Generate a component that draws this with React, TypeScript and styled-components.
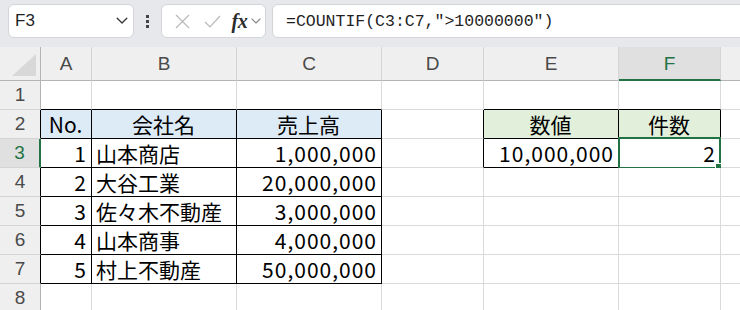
import React from 'react'
import styled, { createGlobalStyle } from 'styled-components'

const GREEN = '#217346'
const GRID = '#dadada'
const HEAD_LINE = '#b4b4b4'

type Align = 'left' | 'center' | 'right'
type Cell = { v: string; align?: Align; fill?: string }

// the last column is only partly in view, so its letter is left off
const columns = ['A', 'B', 'C', 'D', 'E', 'F', 'G']
const labelled = 6
const rows = [1, 2, 3, 4, 5, 6, 7, 8]
const selected = { col: 5, row: 3 }

const BLUE_HEAD = '#ddebf7'
const GREEN_HEAD = '#e2efda'

const companies: [string, string, string][] = [
  ['1', '山本商店', '1,000,000'],
  ['2', '大谷工業', '20,000,000'],
  ['3', '佐々木不動産', '3,000,000'],
  ['4', '山本商事', '4,000,000'],
  ['5', '村上不動産', '50,000,000'],
]

const cells: Record<string, Cell> = {
  A2: { v: 'No.', align: 'center', fill: BLUE_HEAD },
  B2: { v: '会社名', align: 'center', fill: BLUE_HEAD },
  C2: { v: '売上高', align: 'center', fill: BLUE_HEAD },
  E2: { v: '数値', align: 'center', fill: GREEN_HEAD },
  F2: { v: '件数', align: 'center', fill: GREEN_HEAD },
  E3: { v: '10,000,000', align: 'right' },
  F3: { v: '2', align: 'right' },
}
companies.forEach(([no, name, sales], i) => {
  const r = i + 3
  cells[`A${r}`] = { v: no, align: 'right' }
  cells[`B${r}`] = { v: name, align: 'left' }
  cells[`C${r}`] = { v: sales, align: 'right' }
})

// bordered ranges (0-based column, 1-based row)
const tables = [
  { c0: 0, c1: 2, r0: 2, r1: 7 },
  { c0: 4, c1: 5, r0: 2, r1: 3 },
]
const inTable = (c: number, r: number) =>
  tables.some((t) => c >= t.c0 && c <= t.c1 && r >= t.r0 && r <= t.r1)

const GlobalStyle = createGlobalStyle`
  html, body {
    margin: 0;
    background: #fff;
    overflow: hidden;
  }
  * { box-sizing: border-box; }
`

const Page = styled.div`
  width: 740px;
  height: 310px;
  overflow: hidden;
  font-family: 'Liberation Sans', Arial, sans-serif;
`

const Toolbar = styled.div`
  display: flex;
  align-items: flex-start;
  height: 47px;
  padding: 4px 0 0 8px;
  background: #e6e8eb;
`

const Field = styled.div<{ $width?: number }>`
  display: flex;
  align-items: center;
  height: 34px;
  background: #fff;
  border: 1px solid #d3d5d8;
  border-radius: 6px;
  ${(p) => (p.$width ? `width: ${p.$width}px;` : 'flex: 1; margin-right: -12px;')}
`

const NameBox = styled(Field)`
  justify-content: space-between;
  padding: 0 5px 0 6px;
  font-size: 17px;
  color: #1f1f1f;
`

const Grip = styled.div`
  display: flex;
  flex-direction: column;
  align-items: center;
  justify-content: center;
  gap: 2px;
  width: 27px;
  height: 34px;
  span {
    width: 3px;
    height: 3px;
    background: #444;
  }
`

const FxBox = styled(Field)`
  padding: 0 0 0 6px;
`

const FxIcon = styled.span<{ $w?: number }>`
  display: inline-flex;
  align-items: center;
  justify-content: center;
  width: ${(p) => p.$w ?? 30}px;
  height: 32px;
`

const FxLabel = styled.span`
  font-family: 'Liberation Serif', 'Times New Roman', serif;
  font-style: italic;
  font-weight: bold;
  font-size: 20px;
  color: #2b2b2b;
  margin-left: 4px;
  letter-spacing: -0.5px;
`

const Formula = styled(Field)`
  margin-left: 6px;
  padding-left: 13px;
  font-family: 'Liberation Mono', 'Courier New', monospace;
  font-size: 16.5px;
  color: #1f1f1f;
`

const Grid = styled.div`
  display: grid;
  grid-template-columns: 41px 51px 145px 145px 102px 135px 102px 102px;
  grid-template-rows: 34px repeat(8, 29px);
`

const Corner = styled.div`
  position: relative;
  background: #efefef;
  border-right: 1px solid ${HEAD_LINE};
  border-bottom: 1px solid ${HEAD_LINE};
  &::after {
    content: '';
    position: absolute;
    right: 4px;
    bottom: 4px;
    border-style: solid;
    border-width: 0 0 22px 24px;
    border-color: transparent transparent #d8d8d8 transparent;
  }
`

const ColHead = styled.div<{ $active?: boolean }>`
  display: flex;
  align-items: center;
  justify-content: center;
  font-size: 19px;
  color: ${(p) => (p.$active ? GREEN : '#4a4a4a')};
  background: ${(p) => (p.$active ? '#e0e0e0' : '#efefef')};
  border-right: 1px solid #d4d4d4;
  border-bottom: ${(p) => (p.$active ? `2px solid ${GREEN}` : `1px solid ${HEAD_LINE}`)};
  padding-top: ${(p) => (p.$active ? '1px' : '0')};
`

const RowHead = styled.div<{ $active?: boolean; $edge?: boolean }>`
  display: flex;
  align-items: center;
  justify-content: center;
  font-size: 19px;
  color: ${(p) => (p.$active ? GREEN : '#4a4a4a')};
  background: ${(p) => (p.$active ? '#e0e0e0' : '#efefef')};
  border-bottom: 1px solid #d4d4d4;
  border-right: ${(p) =>
    p.$active ? `2px solid ${GREEN}` : `1px solid ${p.$edge ? '#000' : HEAD_LINE}`};
`

const SheetCell = styled.div<{ $align: Align; $fill?: string; $right: boolean; $bottom: boolean }>`
  position: relative;
  display: flex;
  align-items: center;
  justify-content: ${(p) =>
    p.$align === 'left' ? 'flex-start' : p.$align === 'center' ? 'center' : 'flex-end'};
  padding: 0 ${(p) => (p.$align === 'right' ? 4 : 5)}px 0 4px;
  font-family: 'Noto Sans CJK JP', 'Noto Sans', sans-serif;
  font-size: 21px;
  letter-spacing: ${(p) => (p.$align === 'right' ? '1px' : '0')};
  line-height: 1;
  color: #000;
  white-space: nowrap;
  background: ${(p) => p.$fill ?? '#fff'};
  border-right: 1px solid ${(p) => (p.$right ? '#000' : GRID)};
  border-bottom: 1px solid ${(p) => (p.$bottom ? '#000' : GRID)};
`

const Selection = styled.div`
  position: absolute;
  left: -1px;
  top: -2px;
  width: 103px;
  height: 32px;
  border: 2px solid ${GREEN};
  pointer-events: none;
  &::after {
    content: '';
    position: absolute;
    right: -5px;
    bottom: -5px;
    width: 7px;
    height: 7px;
    background: ${GREEN};
    border: 1px solid #fff;
  }
`

const Chevron = ({ color, size }: { color: string; size: number }) => (
  <svg width={size} height={size * 0.6} viewBox="0 0 10 6" fill="none">
    <path d="M1 1l4 4 4-4" stroke={color} strokeWidth="1.1" strokeLinecap="round" strokeLinejoin="round" />
  </svg>
)

export default function App() {
  return (
    <Page>
      <GlobalStyle />
      <Toolbar>
        <NameBox $width={126}>
          <span>F3</span>
          <Chevron color="#333" size={12} />
        </NameBox>
        <Grip>
          <span />
          <span />
          <span />
        </Grip>
        <FxBox $width={105}>
          <FxIcon>
            <svg width="15" height="15" viewBox="0 0 15 15">
              <path d="M1 1l13 13M14 1L1 14" stroke="#b9b9b9" strokeWidth="1.2" />
            </svg>
          </FxIcon>
          <FxIcon>
            <svg width="17" height="13" viewBox="0 0 17 13">
              <path d="M1 7l5 5L16 1" stroke="#b9b9b9" strokeWidth="1.2" fill="none" />
            </svg>
          </FxIcon>
          <FxLabel>fx</FxLabel>
          <FxIcon $w={18}>
            <Chevron color="#8a8a8a" size={10} />
          </FxIcon>
        </FxBox>
        <Formula>=COUNTIF(C3:C7,"&gt;10000000")</Formula>
      </Toolbar>

      <Grid>
        <Corner />
        {columns.map((c, i) => (
          <ColHead key={c} $active={i === selected.col}>
            {i < labelled ? c : null}
          </ColHead>
        ))}
        {rows.map((r) => (
          <React.Fragment key={r}>
            <RowHead $active={r === selected.row} $edge={inTable(0, r)}>
              {r}
            </RowHead>
            {columns.map((c, ci) => {
              const cell = cells[`${c}${r}`]
              return (
                <SheetCell
                  key={c}
                  $align={cell?.align ?? 'left'}
                  $fill={cell?.fill}
                  $right={inTable(ci, r) || inTable(ci + 1, r)}
                  $bottom={inTable(ci, r) || inTable(ci, r + 1)}
                >
                  {cell?.v}
                  {ci === selected.col && r === selected.row && <Selection />}
                </SheetCell>
              )
            })}
          </React.Fragment>
        ))}
      </Grid>
    </Page>
  )
}
